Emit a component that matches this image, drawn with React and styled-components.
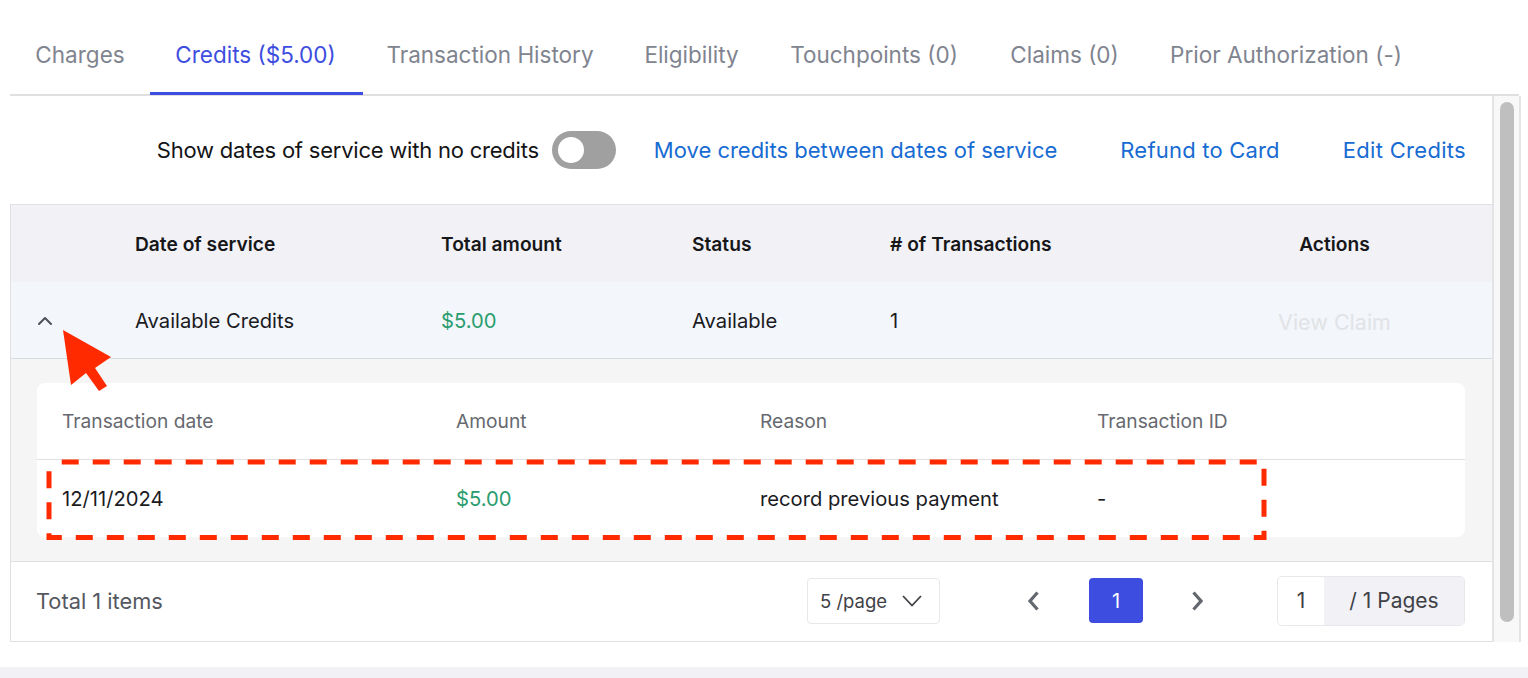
import React from "react";
import styled, { createGlobalStyle } from "styled-components";
import { ChevronUp } from "lucide-react";

const GlobalStyle = createGlobalStyle`
  html, body {
    margin: 0;
    padding: 0;
    background: #fff;
    overflow: hidden;
  }
  * {
    box-sizing: border-box;
  }
`;

const Page = styled.div`
  position: relative;
  width: 1528px;
  height: 678px;
  background: #fff;
  overflow: hidden;
  font-family: Inter, "Liberation Sans", sans-serif;
  font-size: 20px;
  color: #1b1b1f;
  display: flex;
  flex-direction: column;
`;

const Tabs = styled.nav`
  margin: 0 9px 0 10px;
  height: 96px;
  display: flex;
  align-items: flex-start;
  border-bottom: 2px solid #e0e0e2;
`;

const Tab = styled.a`
  height: 95px;
  width: ${(p) => p.$w}px;
  padding-top: 41px;
  padding-right: ${(p) => (p.$active ? 2 : 0)}px;
  line-height: 28px;
  text-align: center;
  white-space: nowrap;
  font-size: 22.5px;
  color: ${(p) => (p.$active ? "#3d4de0" : "#80848f")};
  border-bottom: 3px solid ${(p) => (p.$active ? "#3d4de0" : "transparent")};
`;

const Body = styled.div`
  display: flex;
  flex: none;
  height: 546px;
`;

const Main = styled.div`
  width: 1482px;
  display: flex;
  flex-direction: column;
  margin-left: 10px;
`;

const Toolbar = styled.div`
  height: 108px;
  display: flex;
  align-items: center;
  justify-content: flex-end;
  padding-right: 26px;
  padding-bottom: 1px;
`;

const ToggleLabel = styled.span`
  font-size: 22px;
  letter-spacing: -0.22px;
  color: #141416;
  margin-right: 13px;
`;

const Toggle = styled.span`
  width: 64px;
  height: 38px;
  border-radius: 19px;
  background: #a0a0a0;
  padding: 6px;
  margin-right: 38px;
  display: flex;
`;

const Knob = styled.span`
  width: 26px;
  height: 26px;
  border-radius: 50%;
  background: #fff;
`;

const ActionLink = styled.a`
  font-size: 22px;
  letter-spacing: ${(p) => p.$track}px;
  color: #176bd2;
  margin-left: ${(p) => p.$gap || 0}px;
`;

const Table = styled.div`
  flex: 1;
  display: flex;
  flex-direction: column;
  border: 1px solid #e0e0e2;
  border-right: none;
`;

const OuterRow = styled.div`
  display: grid;
  grid-template-columns: 124px 306px 251px 198px 287px 1fr;
  align-items: center;
  height: ${(p) => p.$h}px;
  flex: none;
  background: ${(p) => p.$bg};
  border-bottom: ${(p) => (p.$line ? "1px solid #d8dbe0" : "none")};
`;

const HeadCell = styled.div`
  font-weight: 600;
  font-size: 19.2px;
  color: #17171a;
  text-align: ${(p) => (p.$center ? "center" : "left")};
`;

const Cell = styled.div`
  font-size: 20.2px;
  color: ${(p) => p.$color || "#1b1b1f"};
`;

const MutedAction = styled.div`
  font-size: 21.5px;
  color: #e1e3e6;
  text-align: center;
  padding-top: 4px;
`;

const ToggleCell = styled.div`
  display: flex;
  padding: 2px 0 0 22px;
  color: #4d5158;
`;

const Expanded = styled.div`
  flex: none;
  height: 202px;
  padding: 24px 27px 0 26px;
  background: #f5f5f5;
`;

const Card = styled.div`
  background: #fff;
  border-radius: 8px;
  height: 154px;
`;

const InnerRow = styled.div`
  display: grid;
  grid-template-columns: 394px 304px 337px 1fr;
  align-items: center;
  padding-left: 25px;
  height: ${(p) => p.$h}px;
  border-bottom: ${(p) => (p.$line ? "1px solid #e0e0e2" : "none")};
`;

const InnerHead = styled.div`
  font-size: 19.2px;
  color: #66696f;
`;

const Footer = styled.div`
  flex: 1;
  display: flex;
  align-items: center;
  padding: 0 27px 2px 25px;
  border-top: 1px solid #e0e0e2;
`;

const Total = styled.div`
  font-size: 21.8px;
  color: #55585f;
  margin-right: auto;
`;

const PageSize = styled.div`
  width: 133px;
  height: 46px;
  border: 1px solid #e8e8ec;
  border-radius: 4px;
  display: flex;
  align-items: center;
  justify-content: space-between;
  padding: 0 17px 0 12px;
  font-size: 18.5px;
  color: #3f4147;
  margin-right: 87px;
`;

const Arrow = styled.svg`
  display: block;
  flex: none;
  fill: none;
  stroke: ${(p) => p.$stroke || "#63676e"};
  stroke-width: ${(p) => p.$weight || 3.2}px;
`;

const PageNumber = styled.div`
  width: 54px;
  height: 45px;
  margin: 0 48px 0 50px;
  border-radius: 4px;
  background: #3d4de0;
  color: #fff;
  font-size: 20px;
  display: flex;
  align-items: center;
  justify-content: center;
`;

const Jumper = styled.div`
  margin-left: 74px;
  width: 188px;
  height: 50px;
  border: 1px solid #e8e8ec;
  border-radius: 5px;
  display: flex;
  overflow: hidden;
  color: #3f4147;
`;

const JumperInput = styled.div`
  width: 46px;
  display: flex;
  align-items: center;
  justify-content: center;
  font-size: 21px;
`;

const JumperTotal = styled.div`
  flex: 1;
  background: #f1f1f6;
  display: flex;
  align-items: center;
  justify-content: center;
  font-size: 21px;
`;

const ScrollTrack = styled.div`
  width: 29px;
  height: 546px;
  background: #f8f8f8;
  border-left: 2px solid #e4e4e6;
  border-right: 2px solid #e4e4e6;
  padding: 6px 5px 0 6px;
`;

const ScrollThumb = styled.div`
  height: 520px;
  border-radius: 8px;
  background: #bfbfbf;
`;

const Band = styled.div`
  margin-top: 25px;
  height: 11px;
  background: #f1f1f6;
`;

const Annotation = styled.svg`
  position: absolute;
  left: 0;
  top: 0;
  pointer-events: none;
`;

const tabs = [
  { label: "Charges", w: 140 },
  { label: "Credits ($5.00)", w: 213, active: true },
  { label: "Transaction History", w: 254 },
  { label: "Eligibility", w: 149 },
  { label: "Touchpoints (0)", w: 216 },
  { label: "Claims (0)", w: 165 },
  { label: "Prior Authorization (-)", w: 278 },
];

export default function App() {
  return (
    <Page>
      <GlobalStyle />
      <Tabs>
        {tabs.map((t) => (
          <Tab key={t.label} $w={t.w} $active={t.active}>
            {t.label}
          </Tab>
        ))}
      </Tabs>
      <Body>
        <Main>
          <Toolbar>
            <ToggleLabel>Show dates of service with no credits</ToggleLabel>
            <Toggle>
              <Knob />
            </Toggle>
            <ActionLink $track={-0.01}>Move credits between dates of service</ActionLink>
            <ActionLink $gap={63} $track={0.2}>Refund to Card</ActionLink>
            <ActionLink $gap={63} $track={0.3}>Edit Credits</ActionLink>
          </Toolbar>
          <Table>
            <OuterRow $h={77} $bg="#f1f1f6">
              <div />
              <HeadCell>Date of service</HeadCell>
              <HeadCell>Total amount</HeadCell>
              <HeadCell>Status</HeadCell>
              <HeadCell># of Transactions</HeadCell>
              <HeadCell $center>Actions</HeadCell>
            </OuterRow>
            <OuterRow $h={77} $bg="#f3f6fb" $line>
              <ToggleCell>
                <ChevronUp size={24} strokeWidth={2} />
              </ToggleCell>
              <Cell>Available Credits</Cell>
              <Cell $color="#2a9d6f">$5.00</Cell>
              <Cell>Available</Cell>
              <Cell>1</Cell>
              <MutedAction>View Claim</MutedAction>
            </OuterRow>
            <Expanded>
              <Card>
                <InnerRow $h={77} $line>
                  <InnerHead>Transaction date</InnerHead>
                  <InnerHead>Amount</InnerHead>
                  <InnerHead>Reason</InnerHead>
                  <InnerHead>Transaction ID</InnerHead>
                </InnerRow>
                <InnerRow $h={77}>
                  <Cell>12/11/2024</Cell>
                  <Cell $color="#2a9d6f">$5.00</Cell>
                  <Cell>record previous payment</Cell>
                  <Cell>-</Cell>
                </InnerRow>
              </Card>
            </Expanded>
            <Footer>
              <Total>Total 1 items</Total>
              <PageSize>
                5 /page
                <Arrow width="20" height="12" viewBox="0 0 20 12" $stroke="#3f4147" $weight={1.8}>
                  <path d="M1 1 L10 10.5 L19 1" />
                </Arrow>
              </PageSize>
              <Arrow width="12" height="20" viewBox="0 0 12 20">
                <path d="M10.5 1.5 L3 10 L10.5 18.5" />
              </Arrow>
              <PageNumber>1</PageNumber>
              <Arrow width="12" height="20" viewBox="0 0 12 20">
                <path d="M2.5 1.5 L10 10 L2.5 18.5" />
              </Arrow>
              <Jumper>
                <JumperInput>1</JumperInput>
                <JumperTotal>/ 1 Pages</JumperTotal>
              </Jumper>
            </Footer>
          </Table>
        </Main>
        <ScrollTrack>
          <ScrollThumb />
        </ScrollTrack>
      </Body>
      <Band />
      <Annotation width="1528" height="678" viewBox="0 0 1528 678">
        <polygon
          points="63,330 111,357 95,368 107,386 99,391 86,373 71,385"
          fill="#ff2a00"
        />
        <rect
          x="49"
          y="462"
          width="1215"
          height="75.5"
          fill="none"
          stroke="#ff2a00"
          strokeWidth="5"
          strokeDasharray="17 14"
          strokeDashoffset="-12.7"
        />
      </Annotation>
    </Page>
  );
}
